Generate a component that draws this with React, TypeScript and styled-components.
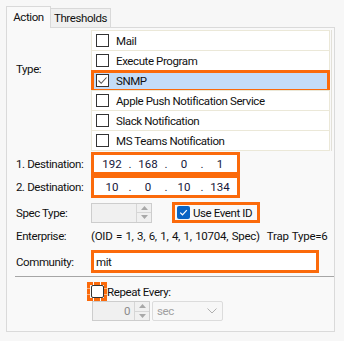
import React from "react";
import styled, { createGlobalStyle, css } from "styled-components";

const ORANGE = "#fb6a0b";

const Global = createGlobalStyle`
  html, body {
    margin: 0;
    padding: 0;
    background: #f7f7f7;
    font-family: Roboto, "Liberation Sans", Arial, sans-serif;
    font-size: 11.5px;
    letter-spacing: -0.4px;
    color: #111;
    white-space: nowrap;
  }
  * { box-sizing: border-box; }
`;

const Root = styled.div`
  width: 344px;
  height: 341px;
  padding: 6px 9px 0 6px;
`;

const TabStrip = styled.div`
  display: flex;
  align-items: flex-end;
  height: 21px;
`;

const Tab = styled.div<{ $active?: boolean }>`
  display: flex;
  align-items: center;
  justify-content: center;
  border: 1px solid #d9d9d9;
  border-bottom: none;
  ${(p) =>
    p.$active
      ? css`
          width: 45px;
          height: 22px;
          margin-bottom: -1px;
          background: #f9f9f9;
          position: relative;
          z-index: 1;
          padding-bottom: 2px;
        `
      : css`
          width: 60px;
          height: 19px;
          border-left: none;
          background: #f0f0f0;
        `}
`;

const Panel = styled.div`
  width: 329px;
  height: 305px;
  border: 1px solid #dadada;
  background: #f9f9f9;
  padding-top: 2px;
`;

const Field = styled.div<{ $h: number; $mt?: number; $labelTop?: number }>`
  display: grid;
  grid-template-columns: 75px auto;
  align-items: ${(p) => (p.$labelTop !== undefined ? "start" : "center")};
  height: ${(p) => p.$h}px;
  margin-top: ${(p) => p.$mt ?? 0}px;
  padding-left: 9px;
`;

const Label = styled.div<{ $top?: number }>`
  padding-top: ${(p) => p.$top ?? 0}px;
`;

const List = styled.div`
  width: 241px;
  padding-right: 1px;
  border-right: 1px solid #e2e0d8;
`;

const ListRow = styled.div<{ $selected?: boolean; $last?: boolean }>`
  position: relative;
  display: flex;
  align-items: center;
  gap: 7px;
  height: ${(p) => (p.$last ? 21 : 20)}px;
  padding-left: 4px;
  border: 1px solid #ebe8d8;
  border-bottom: ${(p) => (p.$last ? "1px solid #ebe8d8" : "none")};
  background: ${(p) => (p.$selected ? "#c4dcf8" : "#fff")};
  ${(p) =>
    p.$selected &&
    css`
      &::after {
        content: "";
        position: absolute;
        top: -1px;
        left: -1px;
        right: -1px;
        bottom: -2px;
        border: 3px solid ${ORANGE};
      }
    `}
`;

const Box = styled.span<{ $round?: boolean }>`
  display: inline-flex;
  align-items: center;
  justify-content: center;
  width: 13px;
  height: 13px;
  border: 1px solid #333;
  background: #fff;
  border-radius: ${(p) => (p.$round ? 2 : 0)}px;
  flex: none;
`;

const BlueBox = styled.span`
  display: inline-flex;
  align-items: center;
  justify-content: center;
  width: 13px;
  height: 13px;
  border-radius: 2px;
  background: #0a64c4;
  flex: none;
`;

const Highlight = styled.div<{ $w: number; $h: number; $dashed?: boolean }>`
  display: flex;
  align-items: center;
  width: ${(p) => p.$w}px;
  height: ${(p) => p.$h}px;
  border: 3px ${(p) => (p.$dashed ? "dashed" : "solid")} ${ORANGE};
  background: ${(p) => (p.$dashed ? "transparent" : "#fff")};
`;

const IpBox = styled(Highlight)`
  padding-left: 3px;
  color: #15153a;
  letter-spacing: 0;
`;

const Octet = styled.span`
  width: 30px;
  text-align: center;
`;

const Dot = styled.span`
  width: 6px;
  text-align: center;
`;

const SpecRow = styled.div`
  display: flex;
  align-items: center;
  gap: 20px;
`;

const Spin = styled.div<{ $w: number }>`
  display: flex;
  width: ${(p) => p.$w}px;
  height: 20px;
  border: 1px solid #cdcdcd;
  background: #f0f0f0;
  color: #8a8a8a;
`;

const SpinValue = styled.div`
  flex: 1;
  display: flex;
  align-items: center;
  justify-content: flex-end;
  padding-right: 4px;
`;

const SpinButtons = styled.div`
  width: 15px;
  display: flex;
  flex-direction: column;
  border-left: 1px solid #d6d6d6;
`;

const SpinBtn = styled.div`
  flex: 1;
  display: flex;
  align-items: center;
  justify-content: center;
  & + & {
    border-top: 1px solid #d6d6d6;
  }
`;

const CheckWrap = styled(Highlight)`
  gap: 3px;
  padding-left: 2px;
  background: transparent;
`;

const OidText = styled.div`
  letter-spacing: -0.25px;
  word-spacing: 0.8px;
`;

const Trap = styled.span`
  margin-left: 7px;
`;

const CommunityBox = styled(Highlight)`
  padding-left: 2px;
`;

const Separator = styled.div`
  margin: 3px 0 0 8px;
  width: 319px;
  border-top: 1px solid #a6a6a6;
`;

const Lower = styled.div`
  padding: 5px 0 0 80px;
`;

const RepeatRow = styled.div`
  display: flex;
  align-items: center;
  height: 19px;
`;

const Options = styled.div`
  display: flex;
  gap: 2px;
  padding-left: 5px;
`;

const Select = styled.div`
  display: flex;
  align-items: center;
  justify-content: space-between;
  width: 71px;
  height: 20px;
  padding: 0 5px 0 4px;
  border: 1px solid #dcdcdc;
  border-radius: 2px;
  background: #f7f7f7;
  color: #a0a0a0;
`;

const Arrow = ({ up }: { up?: boolean }) => (
  <svg width="7" height="4" viewBox="0 0 7 4">
    <path d={up ? "M0 4 L3.5 0 L7 4 Z" : "M0 0 L3.5 4 L7 0 Z"} fill="#a8a8a8" />
  </svg>
);

const types = [
  "Mail",
  "Execute Program",
  "SNMP",
  "Apple Push Notification Service",
  "Slack Notification",
  "MS Teams Notification",
];

export default function App() {
  return (
    <Root>
      <Global />
      <TabStrip>
        <Tab $active>Action</Tab>
        <Tab>Thresholds</Tab>
      </TabStrip>
      <Panel>
        <Field $h={121} $labelTop={0}>
          <Label $top={32}>Type:</Label>
          <List>
            {types.map((t, i) => (
              <ListRow key={t} $selected={t === "SNMP"} $last={i === types.length - 1}>
                <Box>
                  {t === "SNMP" && (
                    <svg width="11" height="11" viewBox="0 0 11 11">
                      <path d="M1.5 5.5 L4.2 8.3 L9.5 2.5" fill="none" stroke="#555" strokeWidth="1.1" />
                    </svg>
                  )}
                </Box>
                {t}
              </ListRow>
            ))}
          </List>
        </Field>

        <Field $h={22} $mt={1}>
          <Label>1. Destination:</Label>
          <IpBox $w={149} $h={23}>
            <Octet>192</Octet><Dot>.</Dot><Octet>168</Octet><Dot>.</Dot>
            <Octet>0</Octet><Dot>.</Dot><Octet>1</Octet>
          </IpBox>
        </Field>
        <Field $h={23} $mt={1}>
          <Label>2. Destination:</Label>
          <IpBox $w={149} $h={23}>
            <Octet>10</Octet><Dot>.</Dot><Octet>0</Octet><Dot>.</Dot>
            <Octet>10</Octet><Dot>.</Dot><Octet>134</Octet>
          </IpBox>
        </Field>

        <Field $h={20} $mt={4}>
          <Label>Spec Type:</Label>
          <SpecRow>
            <Spin $w={61}>
              <SpinValue />
              <SpinButtons>
                <SpinBtn><Arrow up /></SpinBtn>
                <SpinBtn><Arrow /></SpinBtn>
              </SpinButtons>
            </Spin>
            <CheckWrap $w={88} $h={21}>
              <BlueBox>
                <svg width="9" height="9" viewBox="0 0 9 9">
                  <path d="M1.2 4.6 L3.5 6.8 L7.8 2.2" fill="none" stroke="#fff" strokeWidth="1.2" />
                </svg>
              </BlueBox>
              Use Event ID
            </CheckWrap>
          </SpecRow>
        </Field>

        <Field $h={20} $mt={4}>
          <Label>Enterprise:</Label>
          <OidText>
            (OID = 1, 3, 6, 1, 4, 1, 10704, Spec)<Trap>Trap Type=6</Trap>
          </OidText>
        </Field>

        <Field $h={23} $mt={4}>
          <Label>Community:</Label>
          <CommunityBox $w={228} $h={23}>mit</CommunityBox>
        </Field>

        <Separator />

        <Lower>
          <RepeatRow>
            <Highlight $w={20} $h={19} $dashed>
              <Box $round style={{ marginLeft: 1 }} />
            </Highlight>
            Repeat Every:
          </RepeatRow>
          <Options>
            <Spin $w={58}>
              <SpinValue>0</SpinValue>
              <SpinButtons>
                <SpinBtn><Arrow up /></SpinBtn>
                <SpinBtn><Arrow /></SpinBtn>
              </SpinButtons>
            </Spin>
            <Select>
              sec
              <svg width="10" height="6" viewBox="0 0 10 6">
                <path d="M0.5 0.5 L5 5 L9.5 0.5" fill="none" stroke="#b0b0b0" strokeWidth="1" />
              </svg>
            </Select>
          </Options>
        </Lower>
      </Panel>
    </Root>
  );
}
